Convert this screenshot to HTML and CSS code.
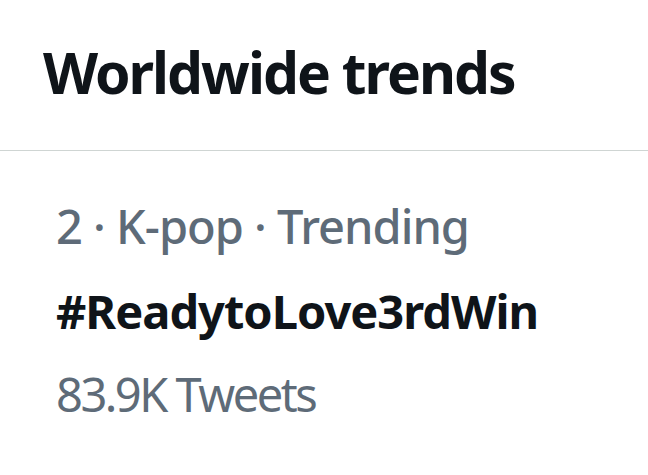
FILE: index.html
```html
<!DOCTYPE html>
<html lang="en">
<head>
  <meta charset="UTF-8">
  <meta name="viewport" content="width=device-width, initial-scale=1.0">
  <title>Worldwide trends</title>
  <link rel="stylesheet" href="styles.css">
</head>
<body>

  <header class="trends-header">
    <h1>Worldwide trends</h1>
  </header>

  <!-- Tendencia -->
  <div class="trend">
    <div class="trend-meta">2 · K-pop · Trending</div>
    <div class="trend-name">#ReadytoLove3rdWin</div>
    <div class="trend-count">83.9K Tweets</div>
  </div>

</body>
</html>
```

FILE: styles.css
```css
/* Estilos globales */
body {
  font-family: 'Noto Sans', sans-serif;
  background-color: #fff;
  color: #0f1419;
  margin: 0;
  padding: 0;
}

.trends-header {
  height: 151px;
  border-bottom: 1px solid #cfd5d3;
  box-sizing: border-box;
  padding: 36px 0 0 43px;
}

.trends-header h1 {
  margin: 0;
  font-size: 57px;
  font-weight: 700;
  letter-spacing: -2px;
  line-height: 72px;
}

/* Tendencia */
.trend {
  padding: 32px 0 0 56px;
}

.trend-meta,
.trend-count {
  color: #5e6b78;
  font-size: 47px;
  line-height: 86px;
}

.trend-meta {
  font-weight: 500;
  letter-spacing: -1px;
}

.trend-name {
  font-size: 47px;
  font-weight: 700;
  letter-spacing: -1px;
  line-height: 84px;
}

.trend-count {
  letter-spacing: -2.5px;
  line-height: 82px;
}
```
